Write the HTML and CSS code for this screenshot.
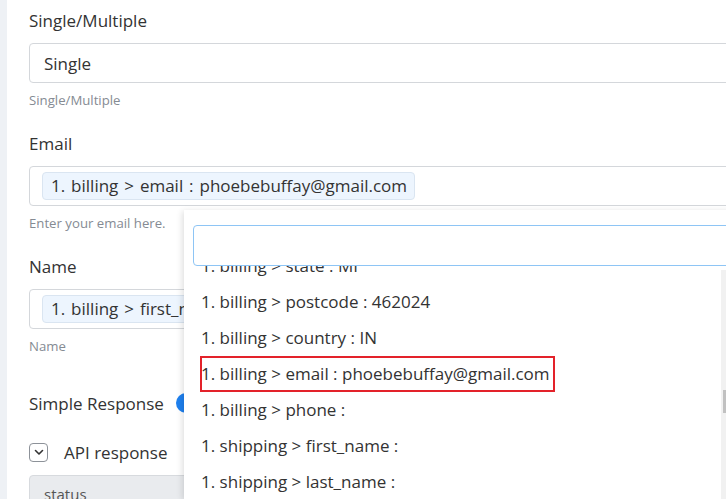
FILE: index.html
```html
<!DOCTYPE html>
<html>
<head>
<meta charset="utf-8">
<link rel="stylesheet" href="styles.css">
</head>
<body>
<div class="page">
  <div class="strip"></div>
  <div class="panel">
    <div class="field">
      <div class="label">Single/Multiple</div>
      <div class="input select">
        <span class="value">Single</span>
        <span class="arrow"></span>
      </div>
      <div class="help">Single/Multiple</div>
    </div>
    <div class="field">
      <div class="label">Email</div>
      <div class="input tags">
        <span class="chip">1. billing &gt; email : phoebebuffay@gmail.com</span>
      </div>
      <div class="help">Enter your email here.</div>
    </div>
    <div class="field">
      <div class="label">Name</div>
      <div class="input tags">
        <span class="chip">1. billing &gt; first_name : Phoebe</span>
      </div>
      <div class="help">Name</div>
    </div>
    <div class="toggle-row">
      <span class="toggle-label">Simple Response</span>
      <span class="toggle"><span class="knob"></span></span>
    </div>
    <div class="check-row">
      <span class="checkbox">
        <svg width="10" height="7" viewBox="0 0 10 7"><path d="M1.5 1.5 L5 5 L8.5 1.5" fill="none" stroke="#333" stroke-width="1.6" stroke-linecap="round" stroke-linejoin="round"/></svg>
      </span>
      <span class="check-label">API response</span>
    </div>
    <div class="graybox">
      <span class="status">status</span>
    </div>
  </div>
</div>

<div class="dropdown">
  <div class="search"></div>
  <div class="list-clip">
    <ul class="list">
      <li>1. billing &gt; state : MI</li>
      <li>1. billing &gt; postcode : 462024</li>
      <li>1. billing &gt; country : IN</li>
      <li><span class="marked">1. billing &gt; email : phoebebuffay@gmail.com</span></li>
      <li>1. billing &gt; phone :</li>
      <li>1. shipping &gt; first_name :</li>
      <li>1. shipping &gt; last_name :</li>
      <li>1. shipping &gt; company :</li>
    </ul>
    <div class="scrollbar"><div class="thumb"></div></div>
  </div>
</div>
</body>
</html>
```
FILE: styles.css
```css
* { box-sizing: border-box; }
html, body { margin: 0; padding: 0; }
body {
  width: 726px;
  height: 499px;
  overflow: hidden;
  position: relative;
  background: #fff;
  font-family: "Open Sans", Lato, sans-serif;
  color: #333;
}
.page {
  display: flex;
  height: 499px;
  overflow: hidden;
}
.strip {
  width: 7px;
  flex: none;
  background: #eef1f5;
}
.panel {
  flex: none;
  width: 740px;
  padding: 11px 0 0 22px;
  background: #fff;
}
.field {
  margin-bottom: 25px;
}
.label {
  font-size: 17px;
  line-height: 20px;
  height: 20px;
  margin-bottom: 12px;
  color: #333;
}
.input {
  height: 40px;
  border: 1px solid #d4d7db;
  border-radius: 4px;
  display: flex;
  align-items: center;
}
.select {
  padding-left: 14px;
  font-size: 17px;
  position: relative;
}
.arrow {
  margin-left: auto;
  margin-right: 13px;
  width: 0;
  height: 0;
  border-left: 3px solid transparent;
  border-right: 3px solid transparent;
  border-top: 3px solid #444;
}
.tags {
  padding-left: 12px;
}
.chip {
  height: 28px;
  line-height: 26px;
  padding: 0 7px 0 8px;
  background: #edf5fe;
  border: 1px solid #dae5f1;
  border-radius: 4px;
  font-size: 17px;
  word-spacing: 1.5px;
  color: #333;
  white-space: nowrap;
}
.help {
  margin-top: 8px;
  font-size: 13.2px;
  line-height: 18px;
  color: #858b93;
}
.toggle-row {
  display: flex;
  align-items: center;
  height: 20px;
  margin-top: 38px;
}
.toggle-label {
  font-size: 17px;
  width: 147px;
}
.toggle {
  width: 40px;
  height: 20px;
  border-radius: 10px;
  background: #1e80ef;
}
.check-row {
  display: flex;
  align-items: center;
  height: 20px;
  margin-top: 29px;
}
.checkbox {
  width: 19px;
  height: 19px;
  border: 1px solid #8d9299;
  border-radius: 4px;
  display: flex;
  align-items: center;
  justify-content: center;
}
.check-label {
  margin-left: 16px;
  font-size: 17px;
}
.graybox {
  margin-top: 13px;
  height: 60px;
  background: #e9ebee;
  border: 1px solid #d7dade;
  border-radius: 4px;
  padding: 8px 14px;
  font-size: 15px;
  color: #555;
}

/* dropdown overlay */
.dropdown {
  position: absolute;
  left: 184px;
  top: 210px;
  width: 560px;
  height: 289px;
  background: #fff;
  box-shadow: -2px 1px 6px rgba(0, 0, 0, 0.12);
  padding: 15px 0 0 9px;
}
.search {
  height: 41px;
  width: 560px;
  border: 1px solid #8ec5f5;
  border-radius: 4px;
  background: #fff;
}
.list-clip {
  position: relative;
  height: 233px;
  overflow: hidden;
  margin-left: -9px;
}
.list {
  list-style: none;
  margin: -18px 0 0 0;
  padding: 0;
}
.list li {
  height: 36px;
  line-height: 36px;
  padding-left: 17px;
  font-size: 17px;
  color: #333;
  white-space: nowrap;
}
.marked {
  position: relative;
  display: inline-block;
}
.marked::after {
  content: "";
  position: absolute;
  left: -1px;
  right: -5px;
  top: 0;
  bottom: 0;
  border: 2px solid #e3222a;
}
.scrollbar {
  position: absolute;
  left: 537px;
  top: 4px;
  width: 6px;
  height: 240px;
  background: #f1f1f1;
}
.thumb {
  position: absolute;
  left: 2px;
  top: 120px;
  width: 3px;
  height: 23px;
  background: #c1c1c1;
}
```
